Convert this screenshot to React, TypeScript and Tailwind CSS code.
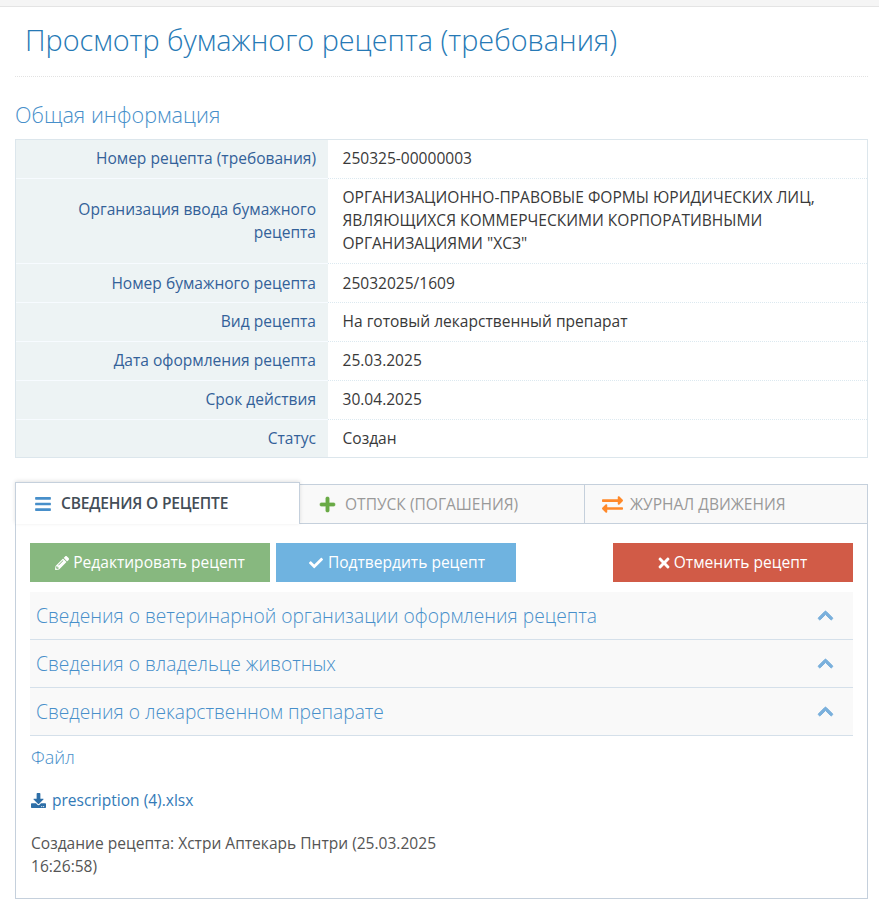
import { FaBars, FaCheck, FaChevronUp, FaDownload, FaExchangeAlt, FaPencilAlt, FaPlus, FaTimes } from 'react-icons/fa'

const rows = [
  { label: 'Номер рецепта (требования)', value: '250325-00000003' },
  {
    label: 'Организация ввода бумажного рецепта',
    value: 'ОРГАНИЗАЦИОННО-ПРАВОВЫЕ ФОРМЫ ЮРИДИЧЕСКИХ ЛИЦ, ЯВЛЯЮЩИХСЯ КОММЕРЧЕСКИМИ КОРПОРАТИВНЫМИ ОРГАНИЗАЦИЯМИ "ХСЗ"',
  },
  { label: 'Номер бумажного рецепта', value: '25032025/1609' },
  { label: 'Вид рецепта', value: 'На готовый лекарственный препарат' },
  { label: 'Дата оформления рецепта', value: '25.03.2025' },
  { label: 'Срок действия', value: '30.04.2025' },
  { label: 'Статус', value: 'Создан' },
]

const sections = [
  'Сведения о ветеринарной организации оформления рецепта',
  'Сведения о владельце животных',
  'Сведения о лекарственном препарате',
]

export default function App() {
  return (
    <div className="min-h-[916px] bg-white font-['Open_Sans',sans-serif] text-[15.55px] leading-[23px] text-[#393939]">
      <div className="h-[7px] border-b border-[#e4e4e4] bg-[#f5f5f5]" />

      <div className="pl-[15px] pr-[11px]">
        {/* заголовок */}
        <div className="border-b border-dotted border-[#e2e2e2] pb-[16px] pl-[10px] pt-[12px]">
          <h1 className="text-[28.8px] font-light leading-[41px] text-[#2679b5]">
            Просмотр бумажного рецепта (требования)
          </h1>
        </div>

        <h2 className="mb-[9px] mt-[22px] text-[21.6px] font-light leading-[31px] text-[#478fca]">Общая информация</h2>

        {/* общая информация */}
        <div className="border border-[#dce6ec]">
          {rows.map((row, index) => (
            <div key={row.label} className="flex">
              <div
                className={`flex w-[312px] shrink-0 items-center justify-end bg-[#edf3f4] pl-[10px] pr-[12px] pt-[7.5px] text-right text-[#336199] ${
                  index < rows.length - 1 ? 'border-b border-[#f7fbff] pb-[7.5px]' : 'pb-[6.5px]'
                }`}
              >
                <span className={index === 1 || index === 2 ? '' : '-translate-y-px'}>{row.label}</span>
              </div>
              <div
                className={`flex-1 pl-[14.5px] pr-[30px] pt-[7.5px] ${
                  index < rows.length - 1 ? 'border-b border-dotted border-[#dce9f0] pb-[7.5px]' : 'pb-[6.5px]'
                }`}
              >
                <div className={index === 2 ? '' : '-translate-y-px'}>{row.value}</div>
              </div>
            </div>
          ))}
        </div>

        {/* вкладки */}
        <div className="mt-[24px] flex h-[42px] items-end">
          <div className="z-10 flex h-[42px] w-[285px] items-center gap-[9px] border-l border-r border-t border-[#c5d0dc] bg-white pl-[18px] font-semibold tracking-[-0.2px] text-[#434d57] shadow-[0_-1px_4px_rgba(0,0,0,0.12)]">
            <FaBars className="text-[18px] text-[#478fca]" />
            <span>СВЕДЕНИЯ О РЕЦЕПТЕ</span>
          </div>
          <div className="flex h-[40px] w-[285px] items-center gap-[9px] border-b border-r border-t border-[#c5d0dc] bg-[#f9f9f9] pl-[19px] text-[#999]">
            <FaPlus className="text-[17px] text-[#69aa46] [&_path]:stroke-[#69aa46] [&_path]:stroke-[20]" />
            <span>ОТПУСК (ПОГАШЕНИЯ)</span>
          </div>
          <div className="flex h-[40px] flex-1 items-center gap-[7px] border-b border-r border-t border-[#c5d0dc] bg-[#f9f9f9] pl-[17px] text-[#999]">
            <FaExchangeAlt className="text-[21px] text-[#ff892a]" />
            <span>ЖУРНАЛ ДВИЖЕНИЯ</span>
          </div>
        </div>

        <div className="border-x border-b border-[#c5d0dc] px-[14px] pb-[20px] pt-[19px]">
          <div className="flex justify-between">
            <div className="flex gap-[6px]">
              <button className="flex h-[39px] w-[240px] items-center justify-center gap-[4px] bg-[#87b87f] text-white">
                <FaPencilAlt className="text-[14px]" /> Редактировать рецепт
              </button>
              <button className="flex h-[39px] w-[240px] items-center justify-center gap-[5px] bg-[#6fb3e0] pl-[2px] text-white">
                <FaCheck className="text-[14px]" /> Подтвердить рецепт
              </button>
            </div>
            <button className="flex h-[39px] w-[240px] items-center justify-center gap-[2px] bg-[#d15b47] pr-[3px] text-white">
              <FaTimes className="text-[16px]" /> Отменить рецепт
            </button>
          </div>

          <div className="mt-[10px]">
            {sections.map(title => (
              <div
                key={title}
                className="flex h-[48px] items-center justify-between border-b border-[#d5e0ea] bg-[#f9f9f9] pl-[6px] pr-[19px] text-[19.2px] font-light text-[#478fca]"
              >
                <span>{title}</span>
                <FaChevronUp className="text-[17px] text-[#7ab0dc] [&_path]:stroke-[#7ab0dc] [&_path]:stroke-[30]" />
              </div>
            ))}
          </div>

          <div className="mt-[9px] pl-px text-[18px] font-light leading-[24px] text-[#478fca]">Файл</div>

          <a className="mt-[20px] flex items-center gap-[6px] pl-px text-[#337ab7]">
            <FaDownload className="text-[15px] text-[#2e6fa8]" />
            prescription (4).xlsx
          </a>

          <p className="mt-[20px] w-[420px] pl-px text-[#555]">
            Создание рецепта: Хстри Аптекарь Пнтри (25.03.2025 16:26:58)
          </p>
        </div>
      </div>
    </div>
  )
}
